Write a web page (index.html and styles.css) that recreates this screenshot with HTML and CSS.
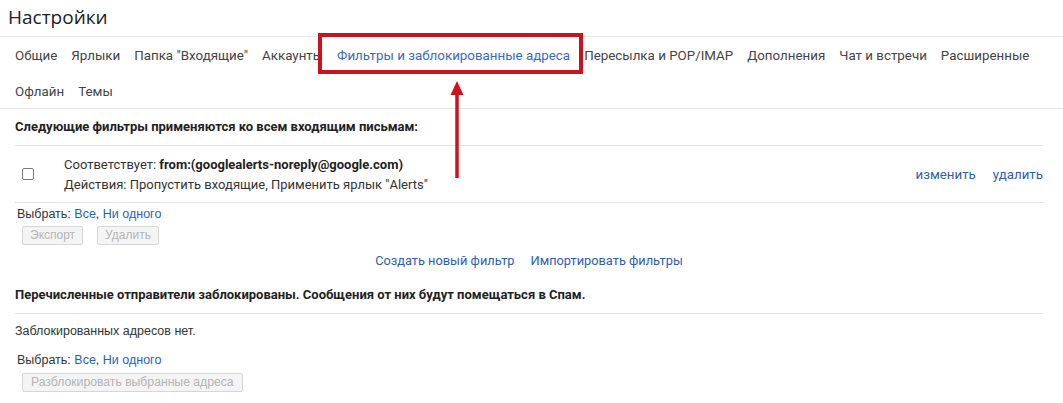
FILE: index.html
```html
<!DOCTYPE html>
<html lang="ru">
<head>
<meta charset="utf-8">
<title>Настройки</title>
<link rel="stylesheet" href="styles.css">
</head>
<body>
<div class="page">
  <h1 class="title">Настройки</h1>
  <nav class="tabs">
    <span class="tab">Общие</span>
    <span class="tab">Ярлыки</span>
    <span class="tab">Папка "Входящие"</span>
    <span class="tab">Аккаунты</span>
    <span class="tab tab-active">Фильтры и заблокированные адреса</span>
    <span class="tab">Пересылка и POP/IMAP</span>
    <span class="tab">Дополнения</span>
    <span class="tab">Чат и встречи</span>
    <span class="tab">Расширенные</span>
    <span class="tab">Офлайн</span>
    <span class="tab">Темы</span>
  </nav>

  <section class="section">
    <div class="section-head">Следующие фильтры применяются ко всем входящим письмам:</div>
    <div class="filter-row">
      <span class="check"></span>
      <div class="filter-text">
        <div>Соответствует: <b>from:(googlealerts-noreply@google.com)</b></div>
        <div>Действия: Пропустить входящие, Применить ярлык "Alerts"</div>
      </div>
      <div class="filter-actions">
        <a class="link">изменить</a>
        <a class="link">удалить</a>
      </div>
    </div>
    <div class="select">Выбрать: <a class="link">Все</a>, <a class="link">Ни одного</a></div>
    <div class="buttons">
      <span class="btn">Экспорт</span>
      <span class="btn">Удалить</span>
    </div>
    <div class="center-links">
      <a class="link">Создать новый фильтр</a>
      <a class="link">Импортировать фильтры</a>
    </div>
  </section>

  <section class="section">
    <div class="section-head head2">Перечисленные отправители заблокированы. Сообщения от них будут помещаться в Спам.</div>
    <div class="empty">Заблокированных адресов нет.</div>
    <div class="select select2">Выбрать: <a class="link">Все</a>, <a class="link">Ни одного</a></div>
    <div class="buttons buttons2">
      <span class="btn btn-wide">Разблокировать выбранные адреса</span>
    </div>
  </section>

  <svg class="arrow" width="20" height="100" viewBox="0 0 20 100" aria-hidden="true">
    <line x1="10" y1="12" x2="10" y2="98" stroke="#d0121b" stroke-width="3.5"/>
    <polygon points="10,1 3.5,15 16.5,15" fill="#d0121b"/>
  </svg>
</div>
</body>
</html>
```

FILE: styles.css
```css
* { box-sizing: border-box; }
html, body { margin: 0; padding: 0; background: #fff; }
body {
  font-family: Roboto, "Liberation Sans", Arial, sans-serif;
  font-size: 13px;
  color: #222;
}
.page { position: relative; width: 1063px; height: 403px; overflow: hidden; }

.title {
  margin: 0;
  height: 37px;
  padding: 5px 0 0 8px;
  font-family: "Open Sans", Roboto, sans-serif;
  font-weight: 400;
  font-size: 19px;
  line-height: 24px;
  color: #202124;
  border-bottom: 1px solid #e8e8e8;
}

.tabs {
  display: flex;
  flex-wrap: wrap;
  column-gap: 14px;
  padding: 1px 20px 0 15px;
  border-bottom: 1px solid #e5e5e5;
  height: 72px;
  align-content: flex-start;
}
.tab {
  height: 36px;
  line-height: 36px;
  color: #444;
  font-size: 13.35px;
  white-space: nowrap;
}
.tab-active {
  position: relative;
  color: #3c6bb8;
}
.tab-active::after {
  content: "";
  position: absolute;
  left: -19px;
  right: -13px;
  top: -5px;
  bottom: 0;
  border: 4px solid #c8141c;
}

.section { padding: 0 20px 0 15px; }
.section-head {
  height: 37px;
  line-height: 36px;
  font-weight: 700;
  color: #222;
  border-bottom: 1px solid #e2e2e2;
}
.filter-row {
  display: flex;
  align-items: center;
  height: 57px;
  border-bottom: 1px solid #e2e2e2;
}
.check {
  width: 12px;
  height: 12px;
  border: 1px solid #777;
  border-radius: 2px;
  margin-left: 7px;
  margin-right: 30px;
  flex: none;
}
.filter-text {
  flex: 1;
  line-height: 20px;
  color: #333;
  padding-top: 2px;
}
.filter-text b { color: #222; }
.filter-actions {
  display: flex;
  gap: 17px;
  padding-top: 1px;
  font-size: 13.3px;
}
.link { color: #2c5fae; text-decoration: none; cursor: pointer; }

.select {
  padding-left: 2px;
  height: 21px;
  line-height: 22px;
  color: #333;
  font-family: "Liberation Sans", Arial, sans-serif;
  font-size: 12.5px;
}
.buttons {
  display: flex;
  gap: 14px;
  padding: 2px 0 0 7px;
}
.btn {
  height: 19px;
  line-height: 17px;
  padding: 0 7px;
  border: 1px solid #d6d6d6;
  border-radius: 2px;
  background: #f4f4f4;
  color: #b5b5b5;
  font-family: "Liberation Sans", Arial, sans-serif;
  font-size: 12px;
}
.btn-wide { padding: 0 8px; font-size: 12.2px; }
.center-links {
  display: flex;
  justify-content: center;
  gap: 16px;
  padding: 8px 0 0 0;
  height: 32px;
  line-height: 16px;
  font-size: 12.8px;
}
.head2 { height: 37px; line-height: 36px; }
.empty {
  height: 33px;
  line-height: 34px;
  color: #333;
  font-family: "Liberation Sans", Arial, sans-serif;
  font-size: 12.5px;
}
.select2 { height: 25px; line-height: 26px; }
.buttons2 { padding-top: 1px; }

.arrow {
  position: absolute;
  left: 447px;
  top: 80px;
}
```
